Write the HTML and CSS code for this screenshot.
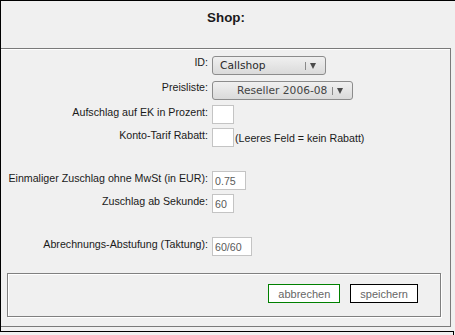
FILE: index.html
```html
<!DOCTYPE html>
<html lang="de">
<head>
  <meta charset="UTF-8">
  <meta name="viewport" content="width=device-width, initial-scale=1.0">
  <title>Shop</title>
  <link rel="stylesheet" href="styles.css">
</head>
<body>
  <div class="frame">
    <div class="header">
      <h1>Shop:</h1>
    </div>
    <div class="main">
      <form class="shop-form">
        <div class="row row-select">
          <label>ID:</label>
          <span class="select select-id">
            <span class="select-text">Callshop</span>
            <span class="select-sep"></span>
            <span class="select-arrow"></span>
          </span>
        </div>
        <div class="row row-select row-second">
          <label>Preisliste:</label>
          <span class="select select-list">
            <span class="select-text">Reseller 2006-08</span>
            <span class="select-sep"></span>
            <span class="select-arrow"></span>
          </span>
        </div>
        <div class="row">
          <label>Aufschlag auf EK in Prozent:</label>
          <span class="field"><input class="input input-s" type="text" value=""></span>
        </div>
        <div class="row">
          <label>Konto-Tarif Rabatt:</label>
          <span class="field"><input class="input input-s" type="text" value=""><span class="hint">(Leeres Feld = kein Rabatt)</span></span>
        </div>
        <div class="spacer"></div>
        <div class="row">
          <label>Einmaliger Zuschlag ohne MwSt (in EUR):</label>
          <span class="field"><input class="input input-m" type="text" value="0.75"></span>
        </div>
        <div class="row">
          <label>Zuschlag ab Sekunde:</label>
          <span class="field"><input class="input input-s" type="text" value="60"></span>
        </div>
        <div class="spacer"></div>
        <div class="row">
          <label>Abrechnungs-Abstufung (Taktung):</label>
          <span class="field"><input class="input input-l" type="text" value="60/60"></span>
        </div>
      </form>
      <div class="actions">
        <button type="button" class="btn btn-cancel">abbrechen</button>
        <button type="button" class="btn btn-save">speichern</button>
      </div>
    </div>
  </div>
  <div class="below"></div>
</body>
</html>
```

FILE: styles.css
```css
* { padding: 0; margin: 0; box-sizing: border-box; }

body {
  background: #f0f0f0;
  font-family: "Liberation Sans", Arial, sans-serif;
  font-size: 10.67px;
  color: #1a1a1a;
  overflow: hidden;
}

.frame {
  border-left: 1px solid #000;
  border-top: 1px solid #000;
  height: 331px;
}

.header {
  height: 47px;
  width: 450px;
  padding-top: 9px;
  text-align: center;
}

h1 {
  font-size: 13.33px;
  font-weight: bold;
  color: #1a1a1a;
}

.main {
  width: 450px;
  height: 279px;
  border-top: 1px solid #7a7a7a;
  border-right: 1px solid #7a7a7a;
  border-bottom: 1px solid #7a7a7a;
  box-shadow: inset 0 1px 0 #fff;
  padding-top: 7px;
}

.shop-form {
  display: flex;
  flex-direction: column;
  gap: 4px;
}

.row {
  display: flex;
  align-items: flex-start;
  gap: 4px;
}

.row label {
  width: 207px;
  text-align: right;
  padding-top: 1px;
}

.row-select label {
  padding-top: 0;
}

.row-second {
  margin-top: 2px;
  margin-bottom: 1px;
}

.field {
  display: flex;
  align-items: center;
}

.spacer {
  height: 16px;
}

.select {
  display: flex;
  align-items: center;
  height: 19px;
  border: 1px solid #8c8c8c;
  border-radius: 3px;
  background: linear-gradient(#f0f0f0, #dadada);
  font-family: "DejaVu Sans", sans-serif;
  font-size: 10.67px;
  color: #2a2a2a;
  padding-right: 9px;
}

.select-id { width: 114px; padding-left: 7px; }
.select-list { width: 141px; padding-left: 24px; color: #444; }

.select-text {
  flex: 1;
  white-space: nowrap;
}

.select-sep {
  width: 1px;
  height: 8px;
  background: #8a8a8a;
  margin-right: 4px;
}

.select-arrow {
  width: 0;
  height: 0;
  border-left: 3.5px solid transparent;
  border-right: 3.5px solid transparent;
  border-top: 6px solid #4a4a4a;
}

.input {
  height: 19px;
  border: 1px solid #c4c4c4;
  background: #fff;
  padding: 0 2px;
  font-family: "Liberation Sans", Arial, sans-serif;
  font-size: 10.67px;
  color: #5a5a5a;
  outline: none;
}

.input-s { width: 22px; }
.input-m { width: 34px; }
.input-l { width: 40px; }

.hint {
  margin-left: 1px;
}

.actions {
  display: flex;
  justify-content: flex-end;
  gap: 10px;
  margin: 17px 0 0 6px;
  width: 434px;
  height: 44px;
  border: 1px solid #808080;
  box-shadow: inset 1px 1px 0 #fff, 1px 1px 0 #fff;
  padding: 10px 22px 0 0;
}

.btn {
  height: 19px;
  padding: 0 9px;
  background: #fff;
  font-family: "Liberation Sans", Arial, sans-serif;
  font-size: 11px;
  color: #666;
}

.btn-cancel { border: 1px solid #008000; }
.btn-save { border: 1px solid #000; }

.below {
  width: 454px;
  height: 4px;
  border-top: 1px solid #000;
  border-right: 1px solid #000;
}
```
